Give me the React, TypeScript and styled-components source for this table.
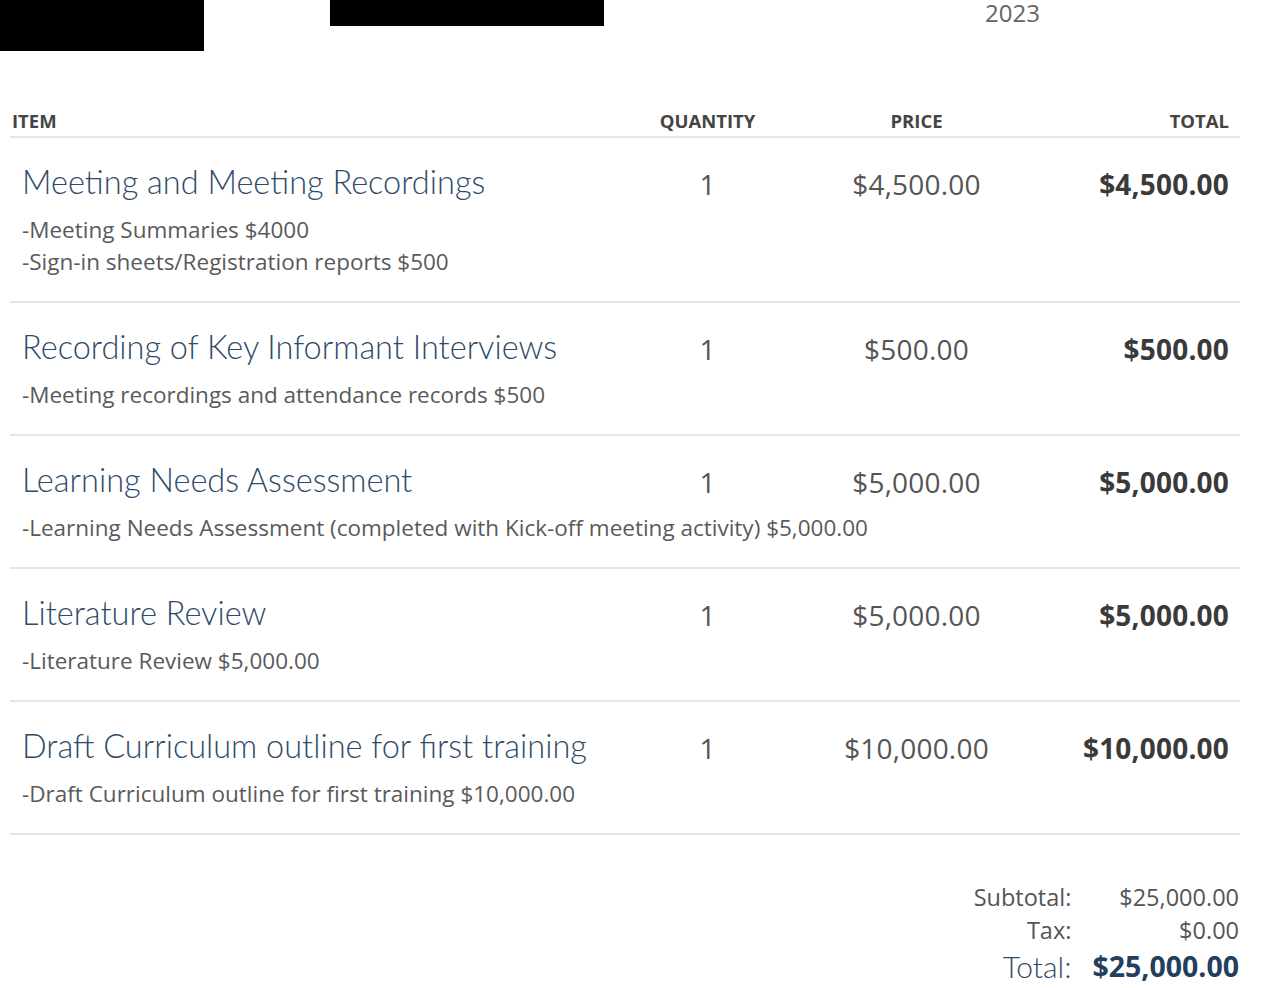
import React from "react"
import styled, { createGlobalStyle } from "styled-components"

const GlobalStyle = createGlobalStyle`
  body {
    margin: 0;
    background: #ffffff;
    font-family: "Open Sans", "Liberation Sans", sans-serif;
    color: #555555;
  }
`

interface LineItem {
  title: string
  details: string[]
  quantity: number
  price: string
  total: string
}

const items: LineItem[] = [
  {
    title: "Meeting and Meeting Recordings",
    details: ["-Meeting Summaries $4000", "-Sign-in sheets/Registration reports $500"],
    quantity: 1,
    price: "$4,500.00",
    total: "$4,500.00",
  },
  {
    title: "Recording of Key Informant Interviews",
    details: ["-Meeting recordings and attendance records $500"],
    quantity: 1,
    price: "$500.00",
    total: "$500.00",
  },
  {
    title: "Learning Needs Assessment",
    details: ["-Learning Needs Assessment (completed with Kick-off meeting activity) $5,000.00"],
    quantity: 1,
    price: "$5,000.00",
    total: "$5,000.00",
  },
  {
    title: "Literature Review",
    details: ["-Literature Review $5,000.00"],
    quantity: 1,
    price: "$5,000.00",
    total: "$5,000.00",
  },
  {
    title: "Draft Curriculum outline for first training",
    details: ["-Draft Curriculum outline for first training $10,000.00"],
    quantity: 1,
    price: "$10,000.00",
    total: "$10,000.00",
  },
]

const App = () => {
  return (
    <>
      <GlobalStyle />
      <TopBar>
        <Redacted $w={204} $h={51} />
        <Redacted $w={274} $h={26} />
        <Year>2023</Year>
      </TopBar>
      <Invoice>
        <HeadRow>
          <HeadCell>Item</HeadCell>
          <HeadCell $align="center">Quantity</HeadCell>
          <HeadCell $align="center">Price</HeadCell>
          <HeadCell $align="right">Total</HeadCell>
        </HeadRow>
        {items.map((item) => (
          <ItemRow key={item.title}>
            <ItemTitle>{item.title}</ItemTitle>
            <Amount $align="center">{item.quantity}</Amount>
            <Amount $align="center">{item.price}</Amount>
            <Amount $align="right" $bold>{item.total}</Amount>
            <Details>
              {item.details.map((d) => (
                <div key={d}>{d}</div>
              ))}
            </Details>
          </ItemRow>
        ))}
        <Summary>
          <SumLabel>Subtotal:</SumLabel>
          <SumLabel>$25,000.00</SumLabel>
          <SumLabel>Tax:</SumLabel>
          <SumLabel>$0.00</SumLabel>
          <GrandLabel>Total:</GrandLabel>
          <GrandValue>$25,000.00</GrandValue>
        </Summary>
      </Invoice>
    </>
  )
}

export default App

const TopBar = styled.header`
  display: flex;
  align-items: flex-start;
  gap: 126px;
  height: 100px;
`

const Redacted = styled.div<{ $w: number; $h: number }>`
  width: ${({ $w }) => $w}px;
  height: ${({ $h }) => $h}px;
  background: #000000;
  flex: 0 0 auto;
`

const Year = styled.div`
  margin-left: auto;
  margin-right: 240px;
  font-size: 24px;
  line-height: 26px;
  color: #666666;
`

const Invoice = styled.main`
  width: 1230px;
  margin-left: 10px;
`

const columns = `
  display: grid;
  grid-template-columns: 590px 215px 203px 1fr;
`

const HeadRow = styled.div`
  ${columns}
  padding: 10px 0 4px;
  border-bottom: 2px solid #e6e6e6;
`

const HeadCell = styled.div<{ $align?: "left" | "center" | "right" }>`
  font-size: 18.5px;
  line-height: 22px;
  font-weight: 700;
  text-transform: uppercase;
  color: #444444;
  text-align: ${({ $align }) => $align || "left"};
  padding: 0 ${({ $align }) => ($align === "right" ? "11px" : "0")} 0 ${({ $align }) => (!$align ? "2px" : "0")};
`

const ItemRow = styled.section`
  ${columns}
  padding: 24px 0 23px;
  border-bottom: 2px solid #e6e6e6;
`

const ItemTitle = styled.div`
  font-family: "Lato", "Liberation Sans", sans-serif;
  font-weight: 300;
  font-size: 32.5px;
  line-height: 40px;
  color: #2e4a68;
  padding-left: 12px;
  white-space: nowrap;
`

const Amount = styled.div<{ $align: "center" | "right"; $bold?: boolean }>`
  font-size: 28px;
  line-height: 44px;
  text-align: ${({ $align }) => $align};
  font-weight: ${({ $bold }) => ($bold ? 700 : 400)};
  color: ${({ $bold }) => ($bold ? "#3a3a3a" : "#555555")};
  letter-spacing: 0.2px;
  padding-right: ${({ $align }) => ($align === "right" ? "11px" : "0")};
`

const Details = styled.div`
  grid-column: 1 / -1;
  margin-top: 8px;
  padding-left: 12px;
  font-size: 22.5px;
  line-height: 32px;
  color: #5a5a5a;
`

const Summary = styled.div`
  display: grid;
  grid-template-columns: auto auto;
  justify-content: end;
  column-gap: 21px;
  margin-top: 46px;
  padding-right: 1px;
`

const SumLabel = styled.div`
  font-size: 23.5px;
  line-height: 33px;
  text-align: right;
  color: #555555;
`

const GrandLabel = styled.div`
  font-family: "Lato", "Liberation Sans", sans-serif;
  font-weight: 300;
  font-size: 30px;
  line-height: 38px;
  text-align: right;
  color: #2e4a68;
`

const GrandValue = styled.div`
  font-size: 28.5px;
  line-height: 38px;
  font-weight: 700;
  text-align: right;
  color: #243f5e;
`
